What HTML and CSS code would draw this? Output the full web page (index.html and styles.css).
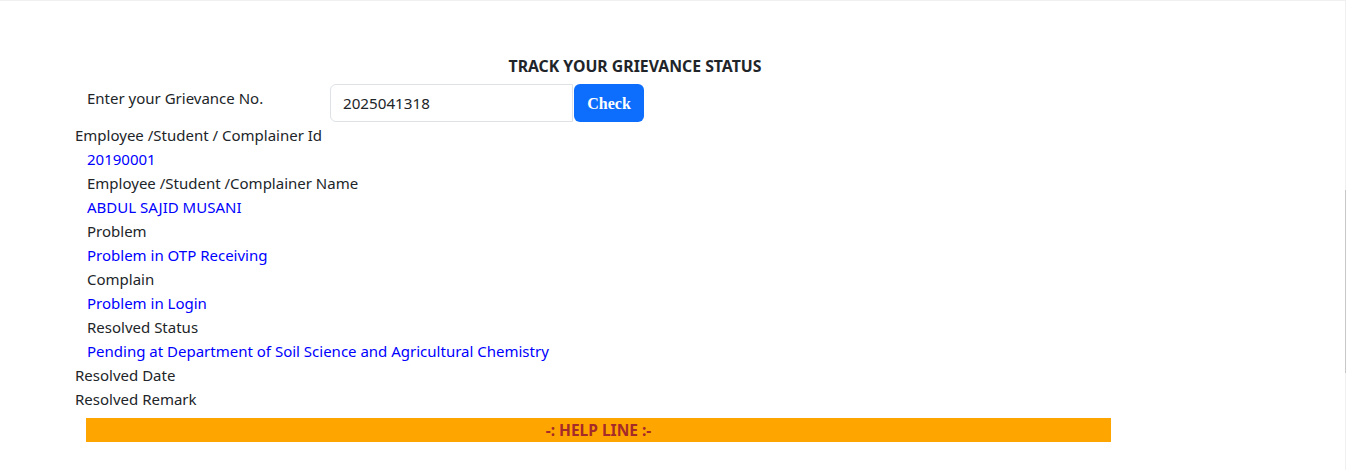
FILE: index.html
```html
<!DOCTYPE html>
<html>
<head>
<meta charset="utf-8">
<link rel="stylesheet" href="styles.css">
</head>
<body>
<div class="page">
  <div class="content">
    <h2 class="title">TRACK YOUR GRIEVANCE STATUS</h2>
    <div class="search-row">
      <label class="search-label">Enter your Grievance No.</label>
      <div class="input-group">
        <input class="grv-input" type="text" value="2025041318">
        <button class="check-btn">Check</button>
      </div>
    </div>
    <div class="details">
      <div class="line">Employee /Student / Complainer Id</div>
      <div class="line indent value">20190001</div>
      <div class="line indent">Employee /Student /Complainer Name</div>
      <div class="line indent value">ABDUL SAJID MUSANI</div>
      <div class="line indent">Problem</div>
      <div class="line indent value">Problem in OTP Receiving</div>
      <div class="line indent">Complain</div>
      <div class="line indent value">Problem in Login</div>
      <div class="line indent">Resolved Status</div>
      <div class="line indent value">Pending at Department of Soil Science and Agricultural Chemistry</div>
      <div class="line">Resolved Date</div>
      <div class="line">Resolved Remark</div>
    </div>
    <div class="helpline">-: HELP LINE :-</div>
  </div>
</div>
<div class="scrollbar"><div class="thumb"></div></div>
</body>
</html>
```

FILE: styles.css
```css
html, body {
  margin: 0;
  padding: 0;
  background: #fff;
}
body {
  font-family: "Noto Sans", "Open Sans", sans-serif;
  font-size: 15px;
  color: #212529;
  border-top: 1px solid #f0f0f0;
  height: 469px;
  overflow: hidden;
}
.page {
  padding-top: 53px;
  padding-left: 75px;
}
.content {
  width: 1120px;
}
.title {
  margin: 0;
  font-size: 15.8px;
  font-weight: 700;
  line-height: 24px;
  text-align: center;
  color: #212529;
}
.search-row {
  display: flex;
  padding-left: 12px;
  margin-top: 6px;
  height: 38px;
}
.search-label {
  width: 243px;
  line-height: 24px;
  padding-top: 2px;
}
.input-group {
  display: flex;
}
.grv-input {
  width: 243px;
  height: 38px;
  box-sizing: border-box;
  border: 1px solid #dee2e6;
  border-radius: 6px 0 0 6px;
  padding: 0 12px;
  font-family: "Noto Sans", "Open Sans", sans-serif;
  font-size: 15.2px;
  color: #212529;
  outline: none;
}
.check-btn {
  width: 70px;
  height: 38px;
  margin-left: 1px;
  border: none;
  border-radius: 6px;
  background: #0d6efd;
  color: #fff;
  font-family: "Liberation Serif", serif;
  font-weight: 700;
  font-size: 16px;
  padding: 2px 0 0;
}
.details {
  margin-top: 1px;
}
.line {
  line-height: 24px;
  height: 24px;
  white-space: nowrap;
}
.indent {
  padding-left: 12px;
}
.value {
  color: #0000ff;
}
.helpline {
  margin: 7px 0 0 11px;
  width: 1025px;
  height: 24px;
  line-height: 24px;
  background: #ffa500;
  color: #a52a2a;
  font-weight: 700;
  font-size: 15.5px;
  text-align: center;
}
.scrollbar {
  position: fixed;
  top: 0;
  right: 0;
  width: 1px;
  height: 470px;
  background: #f0f0f0;
}
.thumb {
  margin-top: 190px;
  height: 183px;
  background: #c8c8c8;
}
```
